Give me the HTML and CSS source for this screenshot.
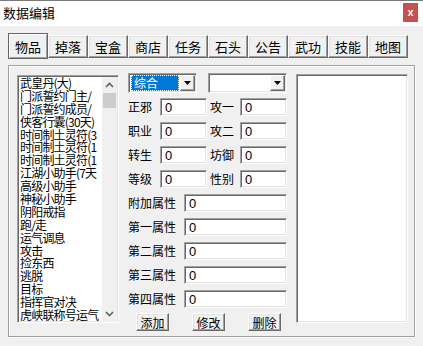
FILE: index.html
```html
<!DOCTYPE html>
<html lang="zh">
  <head>
    <meta charset="UTF-8" />
    <title>数据编辑</title>
    <link rel="stylesheet" href="styles.css">
  </head>
  <body>
    <div class="window">
      <div class="titlebar">
        <span class="title">数据编辑</span>
        <span class="close">x</span>
      </div>

      <div class="tabs">
        <button class="tab active">物品</button>
        <button class="tab">掉落</button>
        <button class="tab">宝盒</button>
        <button class="tab">商店</button>
        <button class="tab">任务</button>
        <button class="tab">石头</button>
        <button class="tab">公告</button>
        <button class="tab">武功</button>
        <button class="tab">技能</button>
        <button class="tab">地图</button>
      </div>

      <div class="panel">
        <div class="list">
          <ul class="items">
            <li>武皇丹(大)</li>
            <li>门派誓约门主/</li>
            <li>门派誓约成员/</li>
            <li>侠客行囊(30天)</li>
            <li>时间制土灵符(3</li>
            <li>时间制土灵符(1</li>
            <li>时间制土灵符(1</li>
            <li>江湖小助手(7天</li>
            <li>高级小助手</li>
            <li>神秘小助手</li>
            <li>阴阳戒指</li>
            <li>跑/走</li>
            <li>运气调息</li>
            <li>攻击</li>
            <li>捡东西</li>
            <li>逃脱</li>
            <li>目标</li>
            <li>指挥官对决</li>
            <li>虎峡联称号运气</li>
          </ul>
          <div class="scrollbar">
            <div class="arrow">
              <svg width="9" height="6" viewBox="0 0 9 6"><path d="M1 5 L4.5 1.5 L8 5" fill="none" stroke="#606060" stroke-width="1.6"/></svg>
            </div>
            <div class="thumb"></div>
            <div class="track"></div>
            <div class="arrow">
              <svg width="9" height="6" viewBox="0 0 9 6"><path d="M1 1 L4.5 4.5 L8 1" fill="none" stroke="#606060" stroke-width="1.6"/></svg>
            </div>
          </div>
        </div>

        <div class="editor">
          <div class="combos">
            <div class="combo first">
              <span class="value"><span class="selected">综合</span></span>
              <span class="drop"><svg width="7" height="4" viewBox="0 0 7 4"><path d="M0 0 H7 L3.5 4 Z" fill="#000"/></svg></span>
            </div>
            <div class="combo second">
              <span class="value"></span>
              <span class="drop"><svg width="7" height="4" viewBox="0 0 7 4"><path d="M0 0 H7 L3.5 4 Z" fill="#000"/></svg></span>
            </div>
          </div>

          <div class="fields">
            <label>正邪</label><input value="0" />
            <label class="right">攻一</label><input value="0" />
            <label>职业</label><input value="0" />
            <label class="right">攻二</label><input value="0" />
            <label>转生</label><input value="0" />
            <label class="right">坊御</label><input value="0" />
            <label>等级</label><input value="0" />
            <label class="right">性别</label><input value="0" />
          </div>

          <div class="attrs">
            <label>附加属性</label><input value="0" />
            <label>第一属性</label><input value="0" />
            <label>第二属性</label><input value="0" />
            <label>第三属性</label><input value="0" />
            <label>第四属性</label><input value="0" />
          </div>

          <div class="actions">
            <button class="btn">添加</button>
            <button class="btn">修改</button>
            <button class="btn">删除</button>
          </div>
        </div>

        <div class="list side"></div>
      </div>
    </div>
  </body>
</html>
```

FILE: styles.css
```css
body {
  margin: 0;
  font-family: "Noto Sans CJK SC", sans-serif;
  background: #f0f0f0;
  color: #000;
}

.window {
  width: 423px;
  height: 346px;
  overflow: hidden;
  background: #f0f0f0;
}

.titlebar {
  height: 26px;
  box-sizing: border-box;
  border-top: 1px solid #7a7a7a;
  background: #fff;
  display: flex;
  justify-content: space-between;
  align-items: flex-start;
}

.title {
  font-size: 13px;
  line-height: 14px;
  margin: 5px 0 0 3px;
}

.close {
  width: 15px;
  height: 19px;
  margin: 2px 5px 0 0;
  background: #c75050;
  color: #fff;
  font-family: "Liberation Sans", sans-serif;
  font-size: 11px;
  font-weight: bold;
  line-height: 18px;
  text-align: center;
}

.tabs {
  display: flex;
  height: 26px;
  margin: 7px 0 0 8px;
}

.tab,
.btn {
  margin: 0;
  padding: 0;
  font-family: inherit;
  background: #f0f0f0;
  box-sizing: border-box;
  border: 1px solid;
  border-color: #fff #696969 #696969 #fff;
  box-shadow: inset -1px -1px 0 #a0a0a0, inset 1px 1px 0 #e3e3e3;
  color: #000;
}

.tab {
  width: 40px;
  height: 23px;
  margin-top: 2px;
  font-size: 13px;
  line-height: 20px;
}

.tab.active {
  height: 26px;
  margin-top: 0;
  border-color: #646464;
  box-shadow: inset 1px 1px 0 #fff, inset -1px -1px 0 #a0a0a0;
  line-height: 26px;
}

.panel {
  width: 407px;
  height: 272px;
  margin: 6px 0 0 8px;
  box-sizing: border-box;
  border: 1px solid #a0a0a0;
  box-shadow: 1px 1px 0 #fff, inset 1px 1px 0 #fff;
  padding: 9px 6px 0 8px;
  display: grid;
  grid-template-columns: 102px 159px 112px;
  column-gap: 9px;
  align-items: start;
}

.list {
  height: 248px;
  box-sizing: border-box;
  background: #fff;
  border: 1px solid;
  border-color: #a0a0a0 #fff #fff #a0a0a0;
  box-shadow: inset 1px 1px 0 #696969, inset -1px -1px 0 #e3e3e3;
  display: flex;
  padding: 0 1px 0 1px;
}

.list.side {
  height: 249px;
  margin-top: -1px;
}

.items {
  flex: 1;
  list-style: none;
  margin: 0;
  padding: 1px 0 0 1px;
  overflow: hidden;
  font-size: 12px;
  line-height: 12.9px;
  letter-spacing: -0.8px;
}

.items li {
  white-space: nowrap;
  height: 12.9px;
}

.scrollbar {
  width: 15px;
  margin-top: 1px;
  background: #f0f0f0;
  display: flex;
  flex-direction: column;
}

.arrow {
  height: 16px;
  display: flex;
  align-items: center;
  justify-content: center;
  background: #f0f0f0;
}

.thumb {
  height: 15px;
  background: #cdcdcd;
  margin: 0 1px;
}

.track {
  flex: 1;
}

.editor {
  margin-top: -2px;
  display: flex;
  flex-direction: column;
}

.combos {
  display: flex;
  gap: 11px;
  height: 20px;
}

.combo {
  box-sizing: border-box;
  height: 20px;
  background: #fff;
  border: 1px solid;
  border-color: #a0a0a0 #fff #fff #a0a0a0;
  box-shadow: inset 1px 1px 0 #696969, inset -1px -1px 0 #e3e3e3;
  padding: 1px;
  display: flex;
}

.combo.first {
  width: 69px;
}

.combo.second {
  width: 79px;
}

.value {
  flex: 1;
  display: flex;
}

.selected {
  flex: 1;
  margin: 0 1px 0 1px;
  background: #0078d7;
  color: #fff;
  outline: 1px dotted #fff;
  outline-offset: -1px;
  font-size: 12px;
  line-height: 16px;
  padding-left: 3px;
}

.drop {
  width: 15px;
  box-sizing: border-box;
  border: 1px solid;
  border-color: #fff #696969 #696969 #fff;
  box-shadow: inset -1px -1px 0 #a0a0a0;
  background: #f0f0f0;
  display: flex;
  align-items: center;
  justify-content: center;
}

.fields {
  margin-top: 5px;
  display: grid;
  grid-template-columns: 32px 47px 33px 47px;
  grid-auto-rows: 18px;
  row-gap: 6px;
}

.attrs {
  margin-top: 6px;
  display: grid;
  grid-template-columns: 56px 103px;
  grid-auto-rows: 18px;
  row-gap: 6px;
}

label {
  font-size: 12px;
  line-height: 18px;
  white-space: nowrap;
}

label.right {
  padding-left: 3px;
}

input {
  width: 100%;
  height: 18px;
  margin: 0;
  box-sizing: border-box;
  border: 1px solid;
  border-color: #a0a0a0 #fff #fff #a0a0a0;
  box-shadow: inset 1px 1px 0 #696969, inset -1px -1px 0 #e3e3e3;
  padding: 1px 0 0 4px;
  font-family: "Liberation Sans", sans-serif;
  font-size: 13px;
  background: #fff;
}

.actions {
  margin-top: 5px;
  padding: 0 6px 0 8px;
  display: flex;
  justify-content: space-between;
}

.btn {
  width: 33px;
  height: 18px;
  font-size: 12px;
  line-height: 15px;
}
```
